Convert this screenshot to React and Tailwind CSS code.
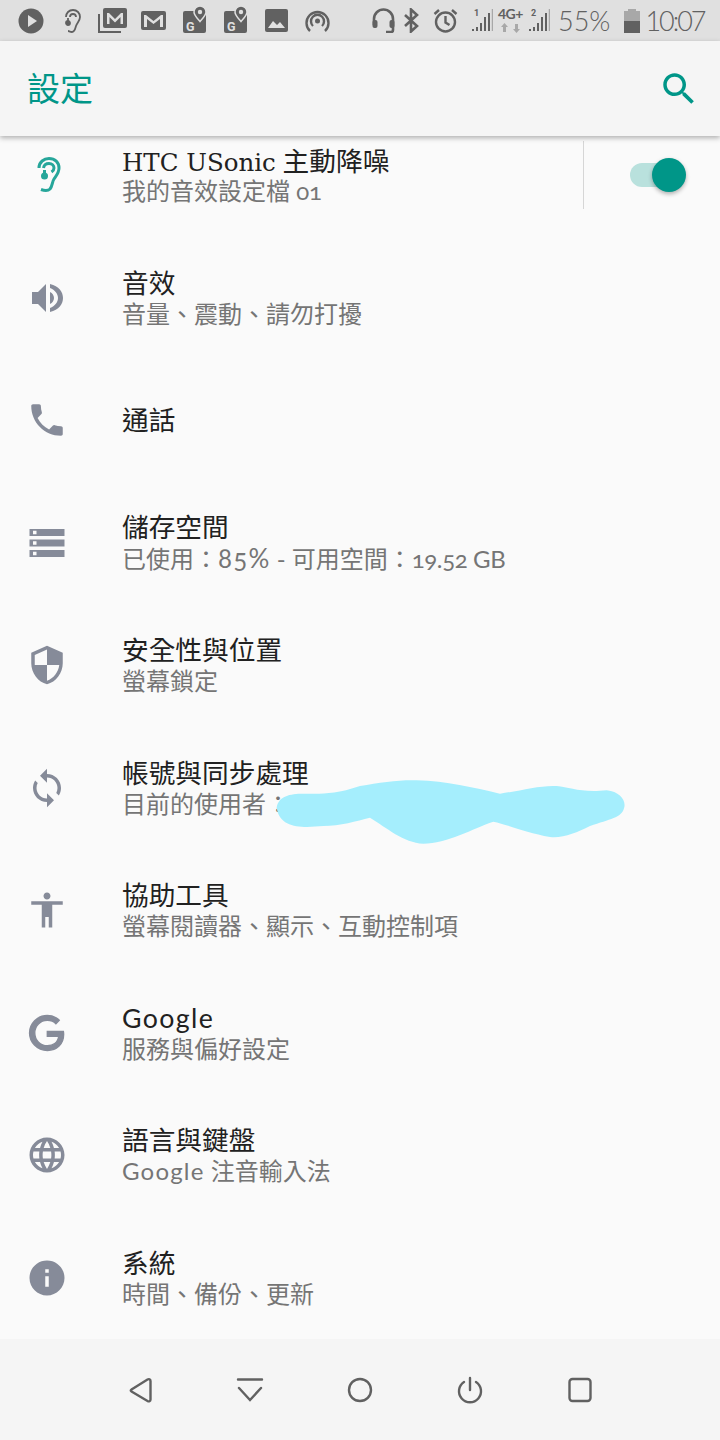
const FONT = "font-['Lato','Noto_Sans_CJK_TC',sans-serif]";

const ICONS = {
  phone: 'M6.62 10.79c1.44 2.83 3.76 5.14 6.59 6.59l2.2-2.2c.27-.27.67-.36 1.02-.24 1.12.37 2.33.57 3.57.57.55 0 1 .45 1 1V20c0 .55-.45 1-1 1-9.39 0-17-7.61-17-17 0-.55.45-1 1-1h3.5c.55 0 1 .45 1 1 0 1.25.2 2.45.57 3.57.11.35.03.74-.25 1.02l-2.2 2.2z',
  storage: 'M2 20h20v-4H2v4zm2-3h2v2H4v-2zM2 4v4h20V4H2zm4 3H4V5h2v2zm-4 7h20v-4H2v4zm2-3h2v2H4v-2z',
  shield: 'M12 1L3 5v6c0 5.55 3.84 10.74 9 12 5.16-1.26 9-6.45 9-12V5l-9-4zm0 10.99h7c-.53 4.12-3.28 7.79-7 8.94V12H5V6.3l7-3.11v8.8z',
  sync: 'M12 4V1L8 5l4 4V6c3.31 0 6 2.69 6 6 0 1.01-.25 1.97-.7 2.8l1.46 1.46C19.54 15.03 20 13.57 20 12c0-4.42-3.58-8-8-8zm0 14c-3.31 0-6-2.69-6-6 0-1.01.25-1.97.7-2.8L5.24 7.74C4.46 8.97 4 10.43 4 12c0 4.42 3.58 8 8 8v3l4-4-4-4v3z',
  person: 'M12 2c1.1 0 2 .9 2 2s-.9 2-2 2-2-.9-2-2 .9-2 2-2zm9 7h-6v13h-2v-6h-2v6H9V9H3V7h18v2z',
  google: 'M21.35 11.1h-9.17v2.73h6.51c-.33 3.81-3.5 5.44-6.5 5.44C8.36 19.27 5 16.25 5 12c0-4.1 3.2-7.27 7.2-7.27 3.09 0 4.9 1.97 4.9 1.97L19 4.72S16.56 2 12.1 2C6.42 2 2.03 6.8 2.03 12c0 5.05 4.13 10 10.22 10 5.35 0 9.25-3.67 9.25-9.09 0-1.15-.15-1.81-.15-1.81z',
  globe: 'M11.99 2C6.47 2 2 6.48 2 12s4.47 10 9.99 10C17.52 22 22 17.52 22 12S17.52 2 11.99 2zm6.93 6h-2.95c-.32-1.25-.78-2.45-1.38-3.56 1.84.63 3.37 1.91 4.33 3.56zM12 4.04c.83 1.2 1.48 2.53 1.91 3.96h-3.82c.43-1.43 1.08-2.76 1.91-3.96zM4.26 14C4.1 13.36 4 12.69 4 12s.1-1.36.26-2h3.38c-.08.66-.14 1.32-.14 2 0 .68.06 1.34.14 2H4.26zm.82 2h2.95c.32 1.25.78 2.45 1.38 3.56-1.84-.63-3.37-1.9-4.33-3.56zm2.95-8H5.08c.96-1.66 2.49-2.93 4.33-3.56C8.81 5.55 8.35 6.75 8.03 8zM12 19.96c-.83-1.2-1.48-2.53-1.91-3.96h3.82c-.43 1.43-1.08 2.76-1.91 3.96zM14.34 14H9.66c-.09-.66-.16-1.32-.16-2 0-.68.07-1.35.16-2h4.68c.09.65.16 1.32.16 2 0 .68-.07 1.34-.16 2zm.25 5.56c.6-1.11 1.06-2.31 1.38-3.56h2.95c-.96 1.65-2.49 2.93-4.33 3.56zM16.36 14c.08-.66.14-1.32.14-2 0-.68-.06-1.34-.14-2h3.38c.16.64.26 1.31.26 2s-.1 1.36-.26 2h-3.38z',
  info: 'M12 2C6.48 2 2 6.48 2 12s4.48 10 10 10 10-4.48 10-10S17.52 2 12 2zm1 15h-2v-6h2v6zm0-8h-2V7h2v2z',
};

const ROWS = [
  { icon: 'speaker', title: '音效', sub: '音量、震動、請勿打擾' },
  { icon: 'phone', title: '通話' },
  {
    icon: 'storage',
    title: '儲存空間',
    sub: <>已使用：<span className="text-[26px] tracking-[1.2px]">85%</span> - 可用空間：<span className="tracking-[-0.4px]">19.52 GB</span></>,
  },
  { icon: 'shield', title: '安全性與位置', sub: '螢幕鎖定' },
  { icon: 'sync', title: '帳號與同步處理', sub: '目前的使用者：', scribble: true },
  { icon: 'person', title: '協助工具', sub: '螢幕閱讀器、顯示、互動控制項' },
  { icon: 'google', title: <span className="tracking-[1.4px]">Google</span>, sub: '服務與偏好設定' },
  { icon: 'globe', title: '語言與鍵盤', sub: <><span className="tracking-[1.2px]">Google</span> 注音輸入法</> },
  { icon: 'info', title: '系統', sub: '時間、備份、更新' },
];

function MapG({ className }) {
  return (
    <svg width="24" height="27" viewBox="0 0 24 27" className={className}>
      <rect y="5" width="23" height="22" rx="2" fill="#616161" />
      <path d="M17 0a6 6 0 0 1 6 6c0 3.500-4 7-6 9.500-2-2.500-6-6-6-9.500a6 6 0 0 1 6-6z" fill="#616161" stroke="#e0e0e0" strokeWidth="1.500" />
      <circle cx="17" cy="6" r="2.200" fill="#e0e0e0" />
      <text x="3" y="25" fontSize="12.500" fontWeight="700" fill="#e0e0e0" fontFamily="Roboto, sans-serif">G</text>
    </svg>
  );
}

function Signal({ num }) {
  return (
    <svg width="21" height="25" viewBox="0 0 21 25">
      <text x="2" y="8" fontSize="9" fontWeight="700" fill="#616161" fontFamily="Roboto, sans-serif">{num}</text>
      <path d="M1 21v2M5 19v4M9 15v8M13 9v14M17 5v18" stroke="#616161" strokeWidth="2" />
      <path d="M20.500 1v22" stroke="#a8a8a8" strokeWidth="1.500" />
    </svg>
  );
}

function StatusBar() {
  return (
    <div className={`flex h-[41px] items-center bg-[#e0e0e0] text-[#616161] ${FONT}`}>
      <svg width="26" height="26" viewBox="0 0 26 26" className="ml-[18px]">
        <circle cx="13" cy="13" r="12.500" fill="#616161" />
        <path d="M10 7l9 6-9 6z" fill="#e0e0e0" />
      </svg>
      <svg width="18" height="26" viewBox="0 0 18 26" fill="none" stroke="#616161" strokeWidth="1.800" className="ml-[19px]">
        <path d="M3 9c0-4 3-7 7-7s7 3 7 7c0 4-3 6-4 9-1 3-1 6-4 6-2 0-3-1-4-1" />
        <path d="M7 9c0-2 1.500-3 3-3s3 1 3 3" />
        <circle cx="5" cy="15" r="2" fill="#616161" />
        <path d="M5 15V10" />
      </svg>
      <svg width="29" height="25" viewBox="0 0 29 25" className="ml-[17px]">
        <path d="M1 6v18h22" fill="none" stroke="#616161" strokeWidth="2" />
        <rect x="5" y="0" width="24" height="20" rx="2" fill="#616161" />
        <path d="M9 16V5h2l6 6 6-6h2v11h-2.500V9l-5.500 5.500L11.500 9v7z" fill="#e0e0e0" />
      </svg>
      <svg width="25" height="19" viewBox="0 0 25 19" className="ml-[14px]">
        <rect width="25" height="19" rx="2" fill="#616161" />
        <path d="M3 16V4h2l7.500 6L20 4h2v12h-3V8l-6.500 5L6 8v8z" fill="#e0e0e0" />
      </svg>
      <MapG className="ml-[17px] mb-[2px]" />
      <MapG className="ml-[17px] mb-[2px]" />
      <svg width="23" height="23" viewBox="0 0 23 23" className="ml-[17px]">
        <rect width="23" height="23" rx="2" fill="#616161" />
        <path d="M3 19l5-7 4 4 3-3 5 6z" fill="#e0e0e0" />
      </svg>
      <svg width="25" height="23" viewBox="0 0 25 23" fill="none" stroke="#616161" strokeWidth="2.400" className="ml-[17px]">
        <path d="M5 22a11 11 0 1 1 15 0" />
        <path d="M8 17a6.500 6.500 0 1 1 9 0" />
        <circle cx="12.500" cy="12" r="2.500" fill="#616161" stroke="none" />
      </svg>
      <svg width="23" height="25" viewBox="0 0 23 25" fill="none" stroke="#616161" strokeWidth="2.600" className="ml-[42px]">
        <path d="M2 17v-6a9.500 9.500 0 0 1 19 0v11a2 2 0 0 1-2 2h-5" />
        <rect x="0.500" y="12" width="5" height="8" rx="2" fill="#616161" stroke="none" />
        <rect x="17.500" y="12" width="5" height="8" rx="2" fill="#616161" stroke="none" />
      </svg>
      <svg width="15" height="25" viewBox="0 0 15 25" fill="none" stroke="#616161" strokeWidth="2.600" className="ml-[9px]">
        <path d="M1 7l12 11-6 5.500V1.500L13 7 1 18" />
      </svg>
      <svg width="25" height="25" viewBox="0 0 25 25" fill="none" stroke="#616161" strokeWidth="2.400" className="ml-[14px]">
        <circle cx="12.500" cy="14" r="9.500" />
        <path d="M12.500 8v6.500l4 2.500M1.500 6L6 2M23.500 6L19 2" />
      </svg>
      <div className="ml-[14px]"><Signal num="1" /></div>
      <div className="relative ml-[5px] h-[25px] w-[25px]">
        <span className="absolute left-0 top-[-3px] text-[14px] font-bold leading-[18px] tracking-[-0.5px]">4G+</span>
        <svg width="25" height="10" viewBox="0 0 25 10" className="absolute bottom-0 left-0">
          <path d="M8 9V4h2L6.500 0 3 4h2v5zM17 1v5h-2l3.500 4L22 6h-2V1z" fill="#a8a8a8" />
        </svg>
      </div>
      <div className="ml-[6px]"><Signal num="2" /></div>
      <span className="ml-[8px] text-[27px] font-light leading-none">55%</span>
      <svg width="16" height="24" viewBox="0 0 16 24" className="ml-[14px]">
        <path d="M4 2V0h8v2h4v10H0V2z" fill="#a8a8a8" />
        <rect y="12" width="16" height="12" fill="#616161" />
      </svg>
      <span className="ml-[5px] text-[27px] font-light leading-none tracking-[-2px]">10:07</span>
    </div>
  );
}

function Header() {
  return (
    <div className="relative z-10 flex h-[95px] items-center justify-between bg-[#f5f5f5] pl-[27px] pr-[20px] shadow-[0_2px_5px_rgba(0,0,0,0.3)]">
      <span className={`text-[33px] leading-none text-[#009688] ${FONT}`}>設定</span>
      <svg width="42" height="42" viewBox="0 0 24 24" fill="#009688">
        <path d="M15.500 14h-.79l-.28-.27C15.410 12.590 16 11.110 16 9.500 16 5.910 13.090 3 9.500 3S3 5.910 3 9.500 5.910 16 9.500 16c1.610 0 3.090-.59 4.230-1.570l.27.28v.79l5 4.990L20.490 19l-4.990-5zm-6 0C7.010 14 5 11.990 5 9.500S7.010 5 9.500 5 14 7.010 14 9.500 11.990 14 9.500 14z" />
      </svg>
    </div>
  );
}

function RowText({ title, sub, subLeading = 'leading-[30px]' }) {
  return (
    <div className={`flex flex-col ${FONT}`}>
      <span className="text-[26.7px] leading-[31px] text-[#212121]">{title}</span>
      {sub && <span className={`text-[24px] text-[#757575] [font-feature-settings:'onum'] ${subLeading}`}>{sub}</span>}
    </div>
  );
}

function Row({ icon, title, sub, scribble }) {
  return (
    <div className="relative flex h-[122.5px] items-center pl-[26px]">
      <div className="mr-[54px] flex h-[42px] w-[42px] shrink-0 items-center justify-center">
        {icon === 'speaker' ? (
          <svg width="31" height="30" viewBox="0 0 31 30" fill="#868b99">
            <path d="M0 9v12h6l8 8V1L6 9zM18 1c9 2 13 8 13 14s-4 12-13 14v-4c5-2 8-6 8-10s-3-8-8-10zM18 9c2.500 1 4 3.500 4 6s-1.500 5-4 6z" />
          </svg>
        ) : (
          <svg width="42" height="42" viewBox="0 0 24 24" fill="#868b99" stroke={icon === 'google' ? '#868b99' : 'none'} strokeWidth={icon === 'google' ? 0.8 : 0}>
            <path d={ICONS[icon]} />
          </svg>
        )}
      </div>
      <div className="pt-[1px]">
        <RowText title={title} sub={sub} />
      </div>
      {scribble && (
        <svg width="380" height="80" viewBox="0 0 1140 240" className="absolute left-[260px] top-[44px]">
          <path
            d="M50 110C55 75 90 68 130 68C180 68 220 72 300 45C360 35 420 26 470 28C560 30 640 50 720 68C780 60 840 42 890 45C930 48 960 66 1040 58C1080 62 1100 90 1092 112C1085 140 1050 145 990 165C950 185 910 202 870 198C800 185 740 160 700 152C640 172 560 218 490 218C430 215 380 170 330 140C290 150 240 165 190 165C130 170 60 175 50 110Z"
            fill="#a5eefd"
          />
        </svg>
      )}
    </div>
  );
}

function UsonicRow() {
  return (
    <div className="flex h-[122.5px] items-center pl-[37px]">
      <svg width="24" height="36" viewBox="0 0 24 36" fill="none" stroke="#26a69a" strokeWidth="3" className="mr-[61px] shrink-0">
        <path d="M2 11C2 5 7 1.500 12 1.500c6 0 10 4 10 9.500 0 5-3 8-5 11-2 3-1.500 7-4 10-2 2-5 2-9 .5" />
        <path d="M6.500 11c.5-3 2.500-4.500 5.500-4.500s5 2 5 4.500c0 2-1 3-2.500 4" />
        <path d="M7.500 13v6" />
        <circle cx="7.500" cy="19" r="3.500" fill="#26a69a" stroke="none" />
      </svg>
      <div className="flex flex-1 flex-col self-start pt-[32px]">
        <RowText
          title={<><span className="font-['DejaVu_Serif',serif] text-[24.5px]">HTC USonic</span> 主動降噪</>}
          sub="我的音效設定檔 01"
          subLeading="leading-[26px]"
        />
      </div>
      <div className="flex h-[68px] w-[137px] shrink-0 items-center border-l border-[#d6d6d6] pl-[46px]">
        <div className="relative h-[24px] w-[45px] rounded-full bg-[#b9e1dd]">
          <div className="absolute right-[-11px] top-[-5px] h-[34px] w-[34px] rounded-full bg-[#009688] shadow-[0_2px_4px_rgba(0,0,0,0.3)]" />
        </div>
      </div>
    </div>
  );
}

function NavBar() {
  return (
    <div className="flex h-[101px] items-center justify-center bg-[#f5f5f5] pr-[1px]">
      {[
        <path key="a" d="M130.500 11.500c-1 .6-1 1.400 0 2l16 9.500c1.500.8 3 .2 3-1.500V3c0-1.700-1.500-2.300-3-1.500z" transform="translate(-126 0)" />,
        <path key="b" d="M1 1.500h24M2 10l11 12 11-12" strokeLinecap="round" />,
        <circle key="c" cx="13" cy="12" r="11" />,
        <path key="d" d="M7 4a11 11 0 1 0 12 0M13 0v12" strokeLinecap="round" />,
        <rect key="e" x="2.500" y="1" width="21" height="22" rx="3" />,
      ].map((shape, i) => (
        <div key={i} className="flex w-[110px] justify-center">
          <svg width="26" height="24" viewBox="0 0 26 24" fill="none" stroke="#616161" strokeWidth="2.400" className="overflow-visible">
            {shape}
          </svg>
        </div>
      ))}
    </div>
  );
}

export default function App() {
  return (
    <div className="flex h-[1440px] w-[720px] flex-col overflow-hidden bg-[#fafafa]">
      <StatusBar />
      <Header />
      <div className="mt-[-22px] flex-1 overflow-hidden">
        <UsonicRow />
        {ROWS.map((row, i) => <Row key={i} {...row} />)}
      </div>
      <NavBar />
    </div>
  );
}
